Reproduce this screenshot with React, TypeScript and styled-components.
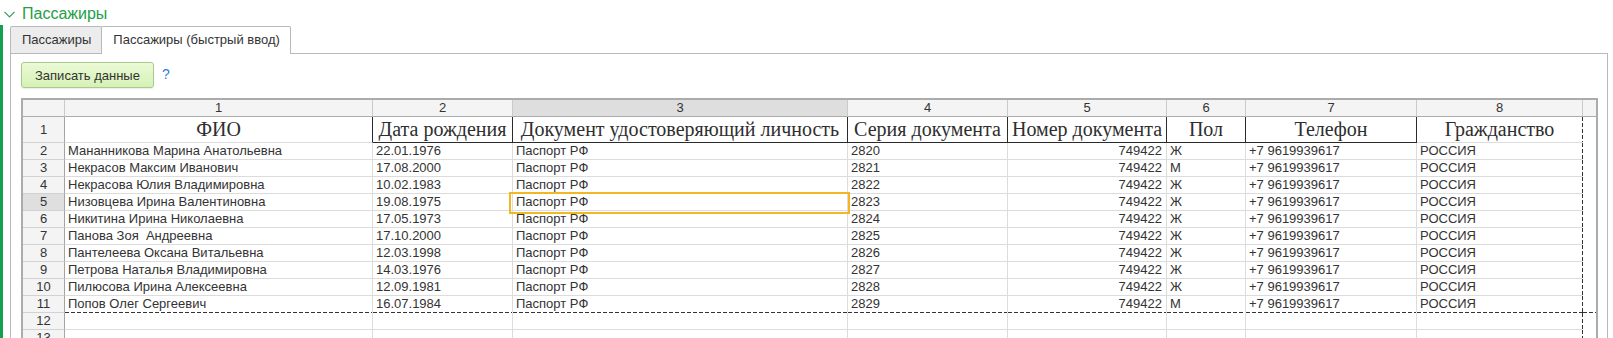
import React from "react";
import styled, { createGlobalStyle, css } from "styled-components";

const GlobalStyle = createGlobalStyle`
  html, body { margin: 0; padding: 0; background: #fff; overflow: hidden; }
  body { font-family: "Liberation Sans", Arial, sans-serif; color: #333; }
`;

const Page = styled.div`
  width: 1613px;
  height: 338px;
  overflow: hidden;
`;

const Header = styled.div`
  height: 25px;
  display: flex;
  align-items: flex-start;
  padding-left: 4px;
  box-sizing: border-box;
`;

const Chevron = styled.svg`
  margin-top: 11px;
  width: 11px;
  height: 7px;
  flex: none;
`;

const Title = styled.div`
  margin-left: 7px;
  padding-top: 4px;
  font-size: 16px;
  line-height: 20px;
  color: #23a046;
`;

const Body = styled.div`
  display: flex;
  align-items: stretch;
`;

const Bar = styled.div`
  width: 3px;
  flex: none;
  background: #14a04f;
`;

const Content = styled.div`
  margin-left: 7px;
  margin-right: 5px;
  flex: 1;
  padding-top: 1px;
`;

const Tabs = styled.div`
  display: flex;
  align-items: flex-start;
  height: 27px;
`;

const Tab = styled.div<{ $active?: boolean }>`
  box-sizing: border-box;
  height: ${(p) => (p.$active ? 28 : 27)}px;
  padding: 0 10px 0 11px;
  border: 1px solid #b9b9b9;
  border-bottom: none;
  border-radius: 2px 2px 0 0;
  background: ${(p) => (p.$active ? "#fff" : "#ececec")};
  font-size: 13px;
  line-height: 26px;
  color: #333;
  white-space: nowrap;
  position: relative;
  z-index: ${(p) => (p.$active ? 2 : 1)};
  margin-left: ${(p) => (p.$active ? "-1px" : "0")};
`;

const Panel = styled.div`
  border: 1px solid #b9b9b9;
  border-bottom: none;
  padding: 8px 8px 0 10px;
  background: #fff;
`;

const Toolbar = styled.div`
  display: flex;
  align-items: center;
  gap: 8px;
  height: 26px;
  margin-bottom: 10px;
`;

const Button = styled.div`
  box-sizing: border-box;
  height: 26px;
  padding: 0 13px;
  display: flex;
  align-items: center;
  border: 1px solid #a9c98d;
  border-radius: 3px;
  background: linear-gradient(#eafad6, #d6f1b6);
  box-shadow: 0 1px 1px rgba(0, 0, 0, 0.08);
  font-size: 13px;
  color: #333;
`;

const Help = styled.div`
  font-size: 14px;
  color: #2f7fd6;
  margin-top: -2px;
`;

const Sheet = styled.div`
  display: grid;
  grid-template-columns: 42px 308px 140px 335px 160px 159px 79px 171px 166px 13px;
  width: fit-content;
  border: 2px solid #ababab;
  border-bottom: none;
  background: #fff;
`;

const dashes = (bottom?: boolean, right?: boolean) => {
  const imgs: string[] = [];
  const pos: string[] = [];
  const size: string[] = [];
  const rep: string[] = [];
  if (bottom) {
    imgs.push("linear-gradient(to right, #333 4px, transparent 4px)");
    pos.push("left bottom");
    size.push("6px 1px");
    rep.push("repeat-x");
  }
  if (right) {
    imgs.push("linear-gradient(to bottom, #333 4px, transparent 4px)");
    pos.push("right top");
    size.push("1px 6px");
    rep.push("repeat-y");
  }
  if (!imgs.length) return "";
  return css`
    background-image: ${imgs.join(", ")};
    background-position: ${pos.join(", ")};
    background-size: ${size.join(", ")};
    background-repeat: ${rep.join(", ")};
    background-origin: border-box;
    background-clip: border-box;
    ${bottom ? "border-bottom-color: transparent;" : ""}
    ${right ? "border-right-color: transparent;" : ""}
  `;
};

const ColHead = styled.div<{ $active?: boolean; $last?: boolean }>`
  box-sizing: border-box;
  height: 17px;
  background: ${(p) => (p.$active ? "#dedede" : "#f4f4f4")};
  border-right: ${(p) => (p.$last ? "none" : "1px solid #cacaca")};
  border-bottom: 1px solid #acacac;
  font-size: 13px;
  line-height: 16px;
  text-align: center;
  color: #333;
`;

const RowHead = styled.div<{ $active?: boolean; $tall?: boolean }>`
  box-sizing: border-box;
  height: ${(p) => (p.$tall ? 26 : 17)}px;
  background: ${(p) => (p.$active ? "#dfdfdf" : "#f4f4f4")};
  border-right: 1px solid #a4a4a4;
  border-bottom: 1px solid #d2d2d2;
  font-size: 13px;
  line-height: ${(p) => (p.$tall ? 25 : 16)}px;
  text-align: center;
  color: #333;
`;

const TitleCell = styled.div<{ $framed?: boolean; $dark?: boolean; $dashRight?: boolean }>`
  box-sizing: border-box;
  height: 26px;
  font-family: "Liberation Serif", "Times New Roman", serif;
  font-size: 20px;
  line-height: 25px;
  text-align: center;
  white-space: nowrap;
  color: #2e2e2e;
  border-bottom: 1px solid ${(p) => (p.$framed ? "#2b2b2b" : "#dcdcdc")};
  border-right: 1px solid ${(p) => (p.$framed || p.$dark ? "#2b2b2b" : "#dcdcdc")};
  ${(p) => dashes(false, p.$dashRight)}
`;

const DataCell = styled.div<{
  $right?: boolean;
  $dashBottom?: boolean;
  $dashRight?: boolean;
}>`
  position: relative;
  box-sizing: border-box;
  height: 17px;
  padding: 0 4px 0 3px;
  font-size: 13px;
  line-height: 16px;
  white-space: pre;
  text-align: ${(p) => (p.$right ? "right" : "left")};
  color: #333;
  border-right: 1px solid #dcdcdc;
  border-bottom: 1px solid #dcdcdc;
  ${(p) => dashes(p.$dashBottom, p.$dashRight)}
`;

const Filler = styled.div<{ $head?: boolean; $dashBottom?: boolean; $tall?: boolean }>`
  box-sizing: border-box;
  height: ${(p) => (p.$tall ? 26 : 17)}px;
  background-color: ${(p) => (p.$head ? "#f4f4f4" : "#fff")};
  border-bottom: 1px solid ${(p) => (p.$head ? "#acacac" : "transparent")};
  ${(p) => dashes(p.$dashBottom, false)}
`;

const Frame = styled.div`
  position: absolute;
  top: -2px;
  left: -4px;
  right: -3px;
  bottom: -4px;
  border: 2px solid #f2b824;
  z-index: 2;
  pointer-events: none;
`;

type Row = [string, string, string, string, string, string, string, string];

const rows: Row[] = [
  ["Мананникова Марина Анатольевна", "22.01.1976", "Паспорт РФ", "2820", "749422", "Ж", "+7 9619939617", "РОССИЯ"],
  ["Некрасов Максим Иванович", "17.08.2000", "Паспорт РФ", "2821", "749422", "М", "+7 9619939617", "РОССИЯ"],
  ["Некрасова Юлия Владимировна", "10.02.1983", "Паспорт РФ", "2822", "749422", "Ж", "+7 9619939617", "РОССИЯ"],
  ["Низовцева Ирина Валентиновна", "19.08.1975", "Паспорт РФ", "2823", "749422", "Ж", "+7 9619939617", "РОССИЯ"],
  ["Никитина Ирина Николаевна", "17.05.1973", "Паспорт РФ", "2824", "749422", "Ж", "+7 9619939617", "РОССИЯ"],
  ["Панова Зоя  Андреевна", "17.10.2000", "Паспорт РФ", "2825", "749422", "Ж", "+7 9619939617", "РОССИЯ"],
  ["Пантелеева Оксана Витальевна", "12.03.1998", "Паспорт РФ", "2826", "749422", "Ж", "+7 9619939617", "РОССИЯ"],
  ["Петрова Наталья Владимировна", "14.03.1976", "Паспорт РФ", "2827", "749422", "Ж", "+7 9619939617", "РОССИЯ"],
  ["Пилюсова Ирина Алексеевна", "12.09.1981", "Паспорт РФ", "2828", "749422", "Ж", "+7 9619939617", "РОССИЯ"],
  ["Попов Олег Сергеевич", "16.07.1984", "Паспорт РФ", "2829", "749422", "М", "+7 9619939617", "РОССИЯ"],
];

const titles = [
  "ФИО",
  "Дата рождения",
  "Документ удостоверяющий личность",
  "Серия документа",
  "Номер документа",
  "Пол",
  "Телефон",
  "Гражданство",
];

export default function App() {
  return (
    <Page>
      <GlobalStyle />
      <Header>
        <Chevron viewBox="0 0 11 7">
          <polyline points="0.5,0.8 5.5,5.8 10.5,0.8" fill="none" stroke="#3a9a5c" strokeWidth="1.2" />
        </Chevron>
        <Title>Пассажиры</Title>
      </Header>
      <Body>
        <Bar />
        <Content>
          <Tabs>
            <Tab>Пассажиры</Tab>
            <Tab $active>Пассажиры (быстрый ввод)</Tab>
          </Tabs>
          <Panel>
            <Toolbar>
              <Button>Записать данные</Button>
              <Help>?</Help>
            </Toolbar>
            <Sheet>
              <ColHead />
              {titles.map((_, i) => (
                <ColHead key={i} $active={i === 2}>
                  {i + 1}
                </ColHead>
              ))}
              <Filler $head />

              <RowHead $tall>1</RowHead>
              {titles.map((t, i) => (
                <TitleCell
                  key={t}
                  $framed={i >= 1 && i <= 6}
                  $dark={i === 0}
                  $dashRight={i === 7}
                >
                  {t}
                </TitleCell>
              ))}
              <Filler $tall />

              {rows.map((r, ri) => {
                const last = ri === rows.length - 1;
                return (
                  <React.Fragment key={ri}>
                    <RowHead $active={ri === 3}>{ri + 2}</RowHead>
                    {r.map((v, ci) => (
                      <DataCell
                        key={ci}
                        $right={ci === 4}
                        $dashBottom={last}
                        $dashRight={ci === 7}
                      >
                        {v}
                        {ri === 3 && ci === 2 && <Frame />}
                      </DataCell>
                    ))}
                    <Filler $dashBottom={last} />
                  </React.Fragment>
                );
              })}

              {[12, 13].map((n) => (
                <React.Fragment key={n}>
                  <RowHead>{n}</RowHead>
                  {titles.map((_, ci) => (
                    <DataCell key={ci} $dashRight={ci === 7} />
                  ))}
                  <Filler />
                </React.Fragment>
              ))}
            </Sheet>
          </Panel>
        </Content>
      </Body>
    </Page>
  );
}
